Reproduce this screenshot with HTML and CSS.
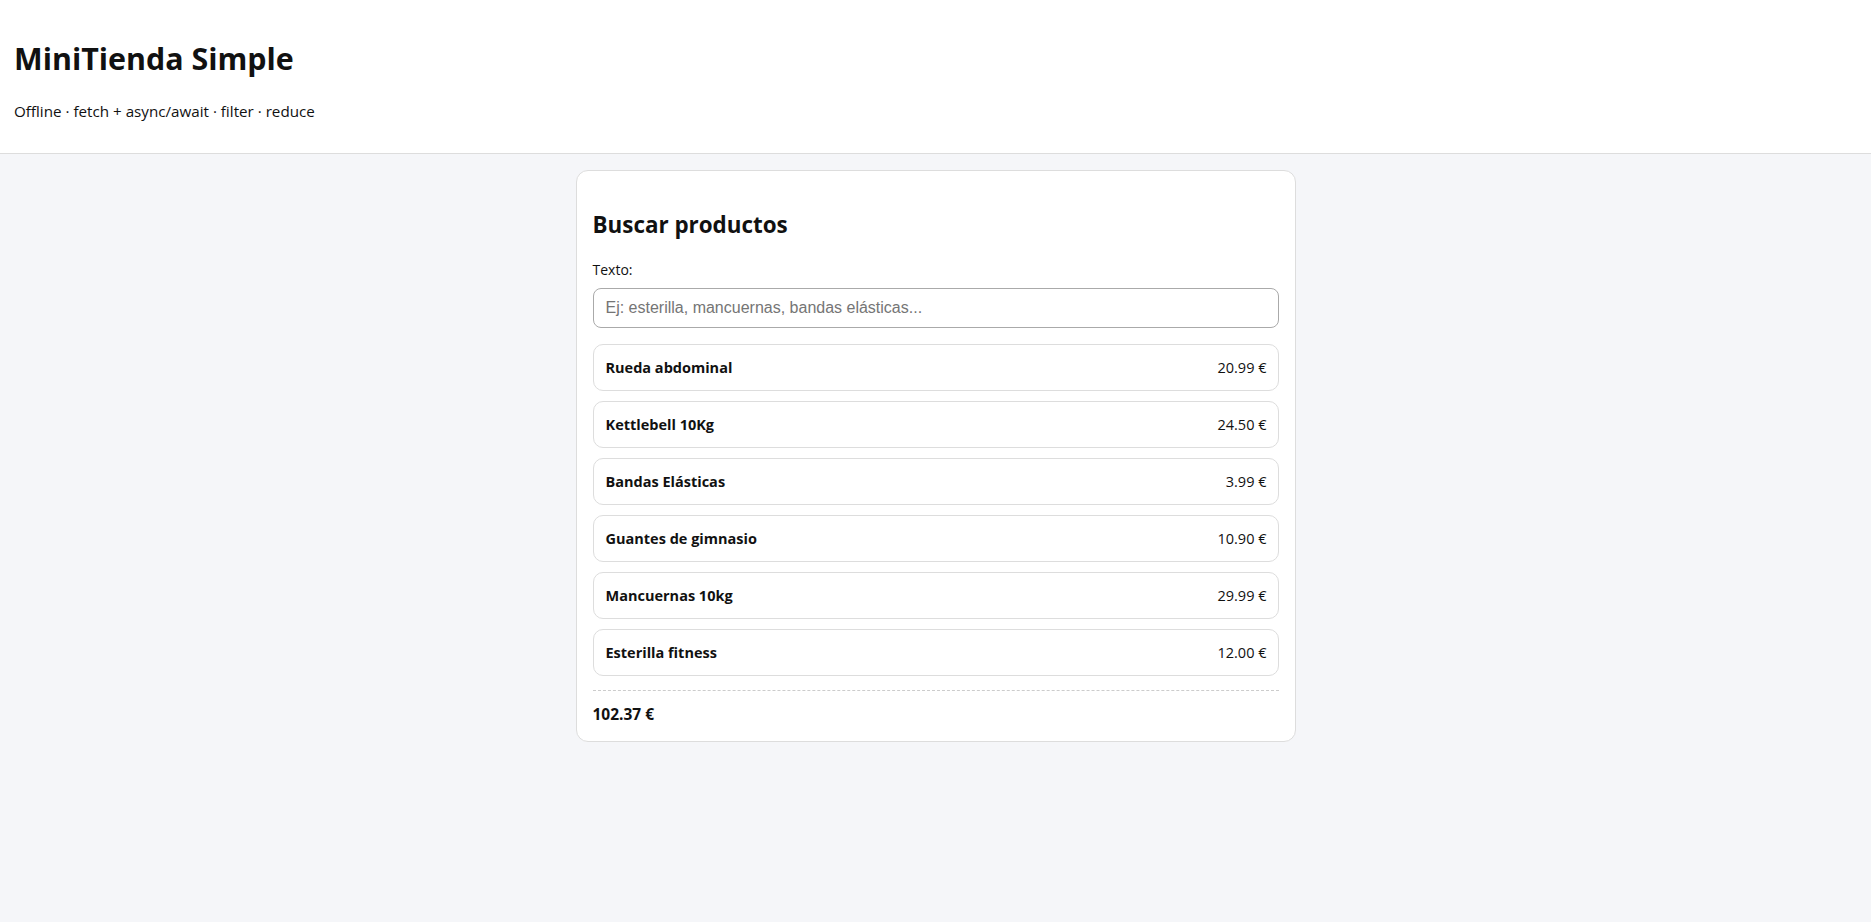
FILE: index.html
```html
<!DOCTYPE html>
<html lang="es">
<head>
    <meta charset="UTF-8">
    <meta name="viewport" content="width=device-width, initial-scale=1.0">
    <title>MiniTienda Simple</title>
    <link rel="stylesheet" href="styles.css">
</head>
<body>
    <header class="top">
        <h1>MiniTienda Simple</h1>
        <p class="subtitle">Offline · fetch + async/await · filter · reduce</p>
    </header>

    <main class="card">
        <h2>Buscar productos</h2>
        <label class="field-label" for="q">Texto:</label>
        <input class="search" id="q" type="text" placeholder="Ej: esterilla, mancuernas, bandas elásticas...">

        <ul class="product-list">
            <li class="product"><span class="product-name">Rueda abdominal</span><span class="product-price">20.99 €</span></li>
            <li class="product"><span class="product-name">Kettlebell 10Kg</span><span class="product-price">24.50 €</span></li>
            <li class="product"><span class="product-name">Bandas Elásticas</span><span class="product-price">3.99 €</span></li>
            <li class="product"><span class="product-name">Guantes de gimnasio</span><span class="product-price">10.90 €</span></li>
            <li class="product"><span class="product-name">Mancuernas 10kg</span><span class="product-price">29.99 €</span></li>
            <li class="product"><span class="product-name">Esterilla fitness</span><span class="product-price">12.00 €</span></li>
        </ul>

        <div class="total">102.37 €</div>
    </main>
</body>
</html>
```

FILE: styles.css
```css
* {
    box-sizing: border-box;
}

body {
    margin: 0;
    background: #f5f6f9;
    color: #111;
    font-family: "Open Sans", "Noto Sans", sans-serif;
    line-height: 1.33;
}

.top {
    background: #fff;
    border-bottom: 1px solid #ddd;
    padding: 16px 14px 15px;
}

.top h1 {
    font-size: 30.4px;
    margin: 21px 0;
    line-height: 43px;
}

.subtitle {
    font-size: 15.2px;
    margin: 16px 0;
    line-height: 21px;
}

.card {
    display: block;
    max-width: 720px;
    margin: 16px auto;
    background: #fff;
    border: 1px solid #ddd;
    border-radius: 12px;
    padding: 16px;
}

.card h2 {
    font-size: 22.4px;
    margin: 22px 0 18px;
    line-height: 32px;
}

.field-label {
    display: block;
    font-size: 14px;
    line-height: 21px;
    margin-bottom: 8px;
}

.search {
    display: block;
    width: 100%;
    font-family: "Liberation Sans", Arial, sans-serif;
    font-size: 16px;
    padding: 10px 12px;
    border: 1px solid #aaa;
    border-radius: 8px;
    color: #111;
}

.search::placeholder {
    color: #757575;
}

.product-list {
    list-style: none;
    margin: 16px 0 0;
    padding: 0;
    display: flex;
    flex-direction: column;
    gap: 10px;
}

.product {
    display: flex;
    justify-content: space-between;
    align-items: center;
    border: 1px solid #ddd;
    border-radius: 10px;
    padding: 12px 11px 12px 12px;
    font-size: 14.5px;
    line-height: 21px;
}

.product-name {
    font-weight: 700;
}

.total {
    margin-top: 14px;
    border-top: 1px dashed #ccc;
    padding-top: 13px;
    font-weight: 700;
    font-size: 15.5px;
    line-height: 21px;
}
```
